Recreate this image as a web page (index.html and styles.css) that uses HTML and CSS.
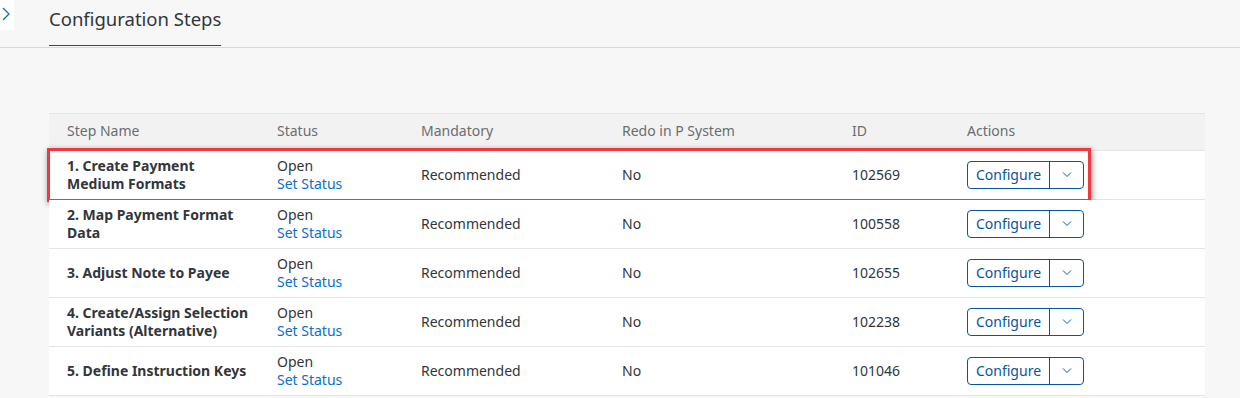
FILE: index.html
```html
<!DOCTYPE html>
<html lang="en">
<head>
    <meta charset="UTF-8">
    <title>Configuration Steps</title>
    <link rel="stylesheet" href="styles.css">
</head>
<body>
    <div class="topbar">
        <div class="expander">
            <svg width="10" height="14" viewBox="0 0 10 14"><path d="M2 1 L8 7 L2 13" fill="none" stroke="#0a6ed1" stroke-width="1.3"/></svg>
        </div>
        <div class="tab">Configuration Steps</div>
    </div>

    <div class="content">
        <div class="table">
            <div class="row head">
                <div class="cell first">Step Name</div>
                <div class="cell">Status</div>
                <div class="cell">Mandatory</div>
                <div class="cell">Redo in P System</div>
                <div class="cell">ID</div>
                <div class="cell">Actions</div>
            </div>

            <div class="row marked">
                <div class="cell first name">1. Create Payment<br>Medium Formats</div>
                <div class="cell status"><span>Open</span><a href="#">Set Status</a></div>
                <div class="cell">Recommended</div>
                <div class="cell">No</div>
                <div class="cell">102569</div>
                <div class="cell"><div class="split"><span class="main">Configure</span><span class="arrow"><svg width="10" height="6" viewBox="0 0 10 6"><path d="M1 0.5 L5 4.5 L9 0.5" fill="none" stroke="#0854a0" stroke-width="1"/></svg></span></div></div>
                <div class="highlight"></div>
            </div>

            <div class="row">
                <div class="cell first name">2. Map Payment Format<br>Data</div>
                <div class="cell status"><span>Open</span><a href="#">Set Status</a></div>
                <div class="cell">Recommended</div>
                <div class="cell">No</div>
                <div class="cell">100558</div>
                <div class="cell"><div class="split"><span class="main">Configure</span><span class="arrow"><svg width="10" height="6" viewBox="0 0 10 6"><path d="M1 0.5 L5 4.5 L9 0.5" fill="none" stroke="#0854a0" stroke-width="1"/></svg></span></div></div>
            </div>

            <div class="row">
                <div class="cell first name">3. Adjust Note to Payee</div>
                <div class="cell status"><span>Open</span><a href="#">Set Status</a></div>
                <div class="cell">Recommended</div>
                <div class="cell">No</div>
                <div class="cell">102655</div>
                <div class="cell"><div class="split"><span class="main">Configure</span><span class="arrow"><svg width="10" height="6" viewBox="0 0 10 6"><path d="M1 0.5 L5 4.5 L9 0.5" fill="none" stroke="#0854a0" stroke-width="1"/></svg></span></div></div>
            </div>

            <div class="row">
                <div class="cell first name">4. Create/Assign Selection<br>Variants (Alternative)</div>
                <div class="cell status"><span>Open</span><a href="#">Set Status</a></div>
                <div class="cell">Recommended</div>
                <div class="cell">No</div>
                <div class="cell">102238</div>
                <div class="cell"><div class="split"><span class="main">Configure</span><span class="arrow"><svg width="10" height="6" viewBox="0 0 10 6"><path d="M1 0.5 L5 4.5 L9 0.5" fill="none" stroke="#0854a0" stroke-width="1"/></svg></span></div></div>
            </div>

            <div class="row">
                <div class="cell first name">5. Define Instruction Keys</div>
                <div class="cell status"><span>Open</span><a href="#">Set Status</a></div>
                <div class="cell">Recommended</div>
                <div class="cell">No</div>
                <div class="cell">101046</div>
                <div class="cell"><div class="split"><span class="main">Configure</span><span class="arrow"><svg width="10" height="6" viewBox="0 0 10 6"><path d="M1 0.5 L5 4.5 L9 0.5" fill="none" stroke="#0854a0" stroke-width="1"/></svg></span></div></div>
            </div>
        </div>
    </div>
</body>
</html>
```

FILE: styles.css
```css
body, html {
    margin: 0;
    padding: 0;
    background-color: #f7f7f7;
    font-family: "Noto Sans", "Liberation Sans", Arial, sans-serif;
    color: #32363a;
    overflow: hidden;
}

.topbar {
    height: 47px;
    border-bottom: 1px solid #d9d9d9;
    display: flex;
    align-items: flex-start;
    position: relative;
}

.expander {
    position: absolute;
    left: 0;
    top: 0;
    width: 14px;
    height: 30px;
    background-color: #fff;
    display: flex;
    align-items: flex-start;
    padding-left: 1px;
    padding-top: 7px;
    box-sizing: border-box;
}

.tab {
    margin-left: 49px;
    height: 46px;
    box-sizing: border-box;
    padding-top: 6px;
    font-size: 18.5px;
    color: #32363a;
    border-bottom: 1px solid #0854a0;
    width: 172px;
    white-space: nowrap;
}

.content {
    padding: 65px 35px 0 49px;
}

.table {
    width: 1156px;
    border-top: 1px solid #e5e5e5;
}

.row {
    display: grid;
    grid-template-columns: 228px 144px 201px 230px 115px 1fr;
    height: 49px;
    background-color: #fff;
    border-bottom: 1px solid #e5e5e5;
    box-sizing: border-box;
    font-size: 14px;
    position: relative;
}

.row.head {
    height: 37px;
    background-color: #f2f2f2;
    color: #6a6d70;
    padding-bottom: 2px;
}

.cell {
    display: flex;
    align-items: center;
    line-height: 18px;
}

.cell.first {
    padding-left: 18px;
}

.name {
    font-weight: bold;
}

.status {
    flex-direction: column;
    align-items: flex-start;
    justify-content: center;
}

.status a {
    color: #0a6ed1;
    text-decoration: none;
}

.split {
    display: flex;
    height: 28px;
    border: 1px solid #0854a0;
    border-radius: 4px;
    box-sizing: border-box;
    color: #0854a0;
}

.split .main {
    width: 81px;
    display: flex;
    align-items: center;
    justify-content: center;
    border-right: 1px solid #0854a0;
}

.split .arrow {
    width: 33px;
    display: flex;
    align-items: center;
    justify-content: center;
}

.highlight {
    position: absolute;
    left: -2px;
    top: -3px;
    width: 1044px;
    height: 54px;
    border: 3px solid #f0393e;
    box-sizing: border-box;
    box-shadow: 1px 2px 6px rgba(0, 0, 0, 0.45);
    pointer-events: none;
}
```
